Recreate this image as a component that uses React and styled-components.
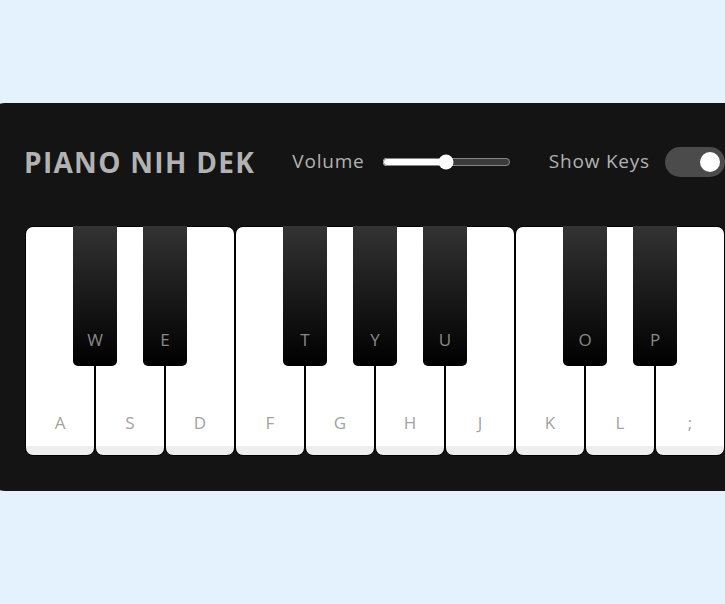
import { useState } from "react";
import styled, { createGlobalStyle } from "styled-components";

const GlobalStyle = createGlobalStyle`
	* {
		margin: 0;
		padding: 0;
		box-sizing: border-box;
	}
	body {
		background: #E3F2FD;
		font-family: "Open Sans", "Liberation Sans", sans-serif;
		overflow: hidden;
	}
`;

const Page = styled.div`
	min-height: 100vh;
	padding-top: 103px;
`;

const Wrapper = styled.div`
	width: max-content;
	margin-left: -15px;
	padding: 35px 40px;
	border-radius: 20px;
	background: #141414;
`;

const Header = styled.header`
	display: flex;
	height: 48px;
	color: #B2B2B2;
	align-items: center;
	justify-content: space-between;
`;

const Title = styled.h2`
	font-size: 28px;
	font-weight: 700;
	letter-spacing: 1.3px;
	margin-left: -1px;
`;

const Column = styled.div`
	display: flex;
	align-items: center;
`;

const Label = styled.span`
	font-weight: 500;
	margin-right: 15px;
	font-size: 19px;
	letter-spacing: 0.8px;
	margin-top: -2px;
`;

const Slider = styled.input`
	width: 129px;
	margin: 0 1px 0 2px;
	accent-color: #fff;
	outline: none;
	border-radius: 30px;
`;

const Toggle = styled.input`
	height: 30px;
	width: 60px;
	cursor: pointer;
	appearance: none;
	position: relative;
	border-radius: 30px;
	outline: none;
	background: #4B4B4B;
	&::before {
		content: "";
		position: absolute;
		top: 50%;
		left: 5px;
		width: 20px;
		height: 20px;
		border-radius: 50%;
		transform: translateY(-50%);
		background: #8c8c8c;
	}
	&:checked::before {
		left: 35px;
		background: #fff;
	}
`;

const Keys = styled.ul`
	display: flex;
	list-style: none;
	margin-top: 40px;
`;

const Key = styled.li`
	cursor: pointer;
	user-select: none;
	position: relative;
	text-transform: uppercase;
	${(props) => props.black ? `
		z-index: 2;
		width: 44px;
		height: 140px;
		margin: 0 -22px;
		border-radius: 0 0 5px 5px;
		background: linear-gradient(#333, #000);
	` : `
		width: 70px;
		height: 230px;
		border-radius: 8px;
		border: 1px solid #000;
		background: linear-gradient(#fff 96%, #eee 4%);
	`}
`;

const KeyName = styled.span`
	position: absolute;
	width: 100%;
	text-align: center;
	font-size: 17px;
	bottom: ${(props) => props.black ? "15px" : "21px"};
	color: ${(props) => props.black ? "#888888" : "#A2A2A2"};
	visibility: ${(props) => props.hidden ? "hidden" : "visible"};
`;

const keyList = ["a", "w", "s", "e", "d", "f", "t", "g", "y", "h", "u", "j", "k", "o", "l", "p", ";"];
const blackKeys = ["w", "e", "t", "y", "u", "o", "p"];

function App() {
	const [volume, setVolume] = useState(0.5);
	const [showKeys, setShowKeys] = useState(true);

	return <>
		<GlobalStyle />
		<Page>
			<Wrapper>
				<Header>
					<Title>PIANO NIH DEK</Title>
					<Column>
						<Label>Volume</Label>
						<Slider type="range" min="0" max="1" step="any" value={volume} onChange={(e) => setVolume(e.target.value)} />
					</Column>
					<Column>
						<Label>Show Keys</Label>
						<Toggle type="checkbox" checked={showKeys} onChange={() => setShowKeys(!showKeys)} />
					</Column>
				</Header>
				<Keys>
					{keyList.map((k) => {
						const black = blackKeys.includes(k);
						return <Key key={k} black={black}>
							<KeyName black={black} hidden={!showKeys}>{k}</KeyName>
						</Key>;
					})}
				</Keys>
			</Wrapper>
		</Page>
	</>;
}

export default App;
